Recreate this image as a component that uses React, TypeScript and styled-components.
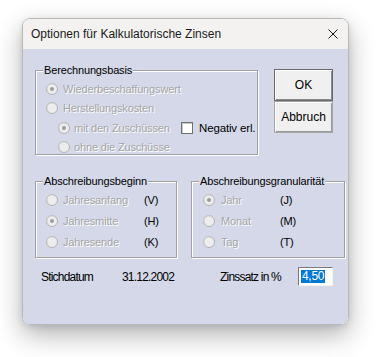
import React from "react";
import styled, { createGlobalStyle } from "styled-components";

const GlobalStyle = createGlobalStyle`
  html, body { margin: 0; padding: 0; background: #ffffff; }
  body { font-family: "Liberation Sans", Arial, sans-serif; }
  * { box-sizing: border-box; }
`;

const Stage = styled.div`
  width: 378px;
  height: 357px;
  padding: 18px 0 0 22px;
  background: #ffffff;
`;

const Window = styled.div`
  width: 327px;
  height: 307px;
  border: 1px solid #b8b8b8;
  border-radius: 8px;
  overflow: hidden;
  display: flex;
  flex-direction: column;
  box-shadow: 0 10px 26px rgba(0, 0, 0, 0.3), 0 2px 6px rgba(0, 0, 0, 0.1);
`;

const TitleBar = styled.div`
  height: 30px;
  flex: none;
  background: #f3f2f1;
  display: flex;
  align-items: center;
  justify-content: space-between;
  padding: 0 10px 0 8px;
  font-size: 12px;
  color: #1a1a1a;
`;

const Body = styled.div`
  flex: 1;
  background: #d4d8e8;
  padding: 15px 0 0 12px;
  font-size: 11px;
  letter-spacing: -0.15px;
`;

const TopRow = styled.div`
  display: flex;
  align-items: flex-start;
`;

const Group = styled.fieldset<{ $w: number; $h: number }>`
  margin: 0;
  padding: 0;
  width: ${(p) => p.$w}px;
  height: ${(p) => p.$h}px;
  border: 1px solid #a0a0a0;
  box-shadow: inset 1px 1px 0 #ffffff, 1px 1px 0 #ffffff;
  min-width: 0;
`;

const Legend = styled.legend`
  margin-left: 7px;
  padding: 0 1px;
  line-height: 13px;
  font-size: 11px;
  color: #000000;
  background: #d4d8e8;
`;

const Rows = styled.div<{ $pt: number; $pl: number }>`
  padding: ${(p) => p.$pt}px 0 0 ${(p) => p.$pl}px;
  display: flex;
  flex-direction: column;
`;

const Row = styled.div<{ $h: number; $indent?: number }>`
  height: ${(p) => p.$h}px;
  display: flex;
  align-items: center;
  padding-left: ${(p) => p.$indent || 0}px;
`;

const RadioBox = styled.span<{ $gap: number }>`
  width: 12px;
  height: 12px;
  flex: none;
  margin-right: ${(p) => p.$gap}px;
  display: inline-flex;
`;

const DisabledText = styled.span<{ $w?: number }>`
  color: #a6a6a6;
  text-shadow: 1px 1px 0 #ffffff;
  white-space: nowrap;
  ${(p) => (p.$w ? `width: ${p.$w}px; flex: none;` : "")}
`;

const Key = styled.span`
  color: #000000;
`;

const CheckBox = styled.span`
  width: 12px;
  height: 12px;
  flex: none;
  background: #ffffff;
  border: 1px solid #6f6f6f;
  box-shadow: inset 1px 1px 0 #c8c8c8;
  margin-right: 6px;
`;

const CheckLabel = styled.span`
  color: #000000;
  font-size: 11.5px;
`;

const ButtonCol = styled.div`
  margin: 5px 0 0 16px;
  display: flex;
  flex-direction: column;
`;

const Button = styled.div<{ $default?: boolean }>`
  width: 59px;
  height: 32px;
  display: flex;
  align-items: center;
  justify-content: center;
  background: #f0f0f0;
  font-size: 12px;
  letter-spacing: 0;
  color: #000000;
  border: 1px solid ${(p) => (p.$default ? "#6a6a6a" : "#a6a6a6")};
  box-shadow: ${(p) =>
    p.$default
      ? "inset 1px 1px 0 #ffffff, inset -1px -1px 0 #8a8a8a"
      : "inset 1px 1px 0 #ffffff, inset -1px -1px 0 #9a9a9a"};
`;

const MiddleRow = styled.div`
  margin-top: 20px;
  display: flex;
  gap: 14px;
`;

const BottomRow = styled.div`
  margin-top: 9px;
  padding-left: 6px;
  height: 19px;
  display: flex;
  align-items: center;
  font-size: 12px;
  letter-spacing: -0.8px;
  color: #000000;
`;

const Cell = styled.span<{ $w: number }>`
  width: ${(p) => p.$w}px;
  flex: none;
  white-space: nowrap;
`;

const Field = styled.div`
  width: 35px;
  height: 19px;
  background: #ffffff;
  border-top: 1px solid #7a7a7a;
  border-left: 1px solid #7a7a7a;
  border-right: 1px solid #f4f4f4;
  border-bottom: 1px solid #f4f4f4;
  padding: 2px 0 0 2px;
  display: flex;
  align-items: flex-start;
`;

const Selected = styled.span`
  background: #0078d7;
  color: #ffffff;
  height: 13px;
  line-height: 13px;
  padding: 0 1px;
  letter-spacing: -0.3px;
`;

const Radio = ({ checked, gap = 5 }: { checked?: boolean; gap?: number }) => (
  <RadioBox $gap={gap}>
    <svg width="12" height="12" viewBox="0 0 12 12">
      <circle cx="6" cy="6" r="5.5" fill="#ededed" stroke="#b2b2b2" />
      <path d="M2.2 8.8 A4.6 4.6 0 0 1 8.8 2.2" fill="none" stroke="#d0d0d0" />
      {checked && <circle cx="6" cy="6" r="2" fill="#9c9c9c" />}
    </svg>
  </RadioBox>
);

const CloseIcon = () => (
  <svg width="10" height="10" viewBox="0 0 10 10">
    <path d="M0.5 0.5 L9.5 9.5 M9.5 0.5 L0.5 9.5" stroke="#1a1a1a" strokeWidth="1" />
  </svg>
);

export default function App() {
  return (
    <Stage>
      <GlobalStyle />
      <Window>
        <TitleBar>
          <span>Optionen für Kalkulatorische Zinsen</span>
          <CloseIcon />
        </TitleBar>
        <Body>
          <TopRow>
            <Group $w={223} $h={91}>
              <Legend>Berechnungsbasis</Legend>
              <Rows $pt={2} $pl={10}>
                <Row $h={19.5}>
                  <Radio checked />
                  <DisabledText>Wiederbeschaffungswert</DisabledText>
                </Row>
                <Row $h={19.5}>
                  <Radio />
                  <DisabledText>Herstellungskosten</DisabledText>
                </Row>
                <Row $h={19.5} $indent={12}>
                  <Radio checked gap={4} />
                  <DisabledText $w={107}>mit den Zuschüssen</DisabledText>
                  <CheckBox />
                  <CheckLabel>Negativ erl.</CheckLabel>
                </Row>
                <Row $h={19.5} $indent={12}>
                  <Radio gap={4} />
                  <DisabledText>ohne die Zuschüsse</DisabledText>
                </Row>
              </Rows>
            </Group>
            <ButtonCol>
              <Button $default>OK</Button>
              <Button>Abbruch</Button>
            </ButtonCol>
          </TopRow>
          <MiddleRow>
            <Group $w={142} $h={83}>
              <Legend>Abschreibungsbeginn</Legend>
              <Rows $pt={1} $pl={10}>
                <Row $h={21}>
                  <Radio />
                  <DisabledText $w={81}>Jahresanfang</DisabledText>
                  <Key>(V)</Key>
                </Row>
                <Row $h={21}>
                  <Radio checked />
                  <DisabledText $w={81}>Jahresmitte</DisabledText>
                  <Key>(H)</Key>
                </Row>
                <Row $h={21}>
                  <Radio />
                  <DisabledText $w={81}>Jahresende</DisabledText>
                  <Key>(K)</Key>
                </Row>
              </Rows>
            </Group>
            <Group $w={154} $h={83}>
              <Legend>Abschreibungsgranularität</Legend>
              <Rows $pt={1} $pl={11}>
                <Row $h={21}>
                  <Radio checked gap={6} />
                  <DisabledText $w={59}>Jahr</DisabledText>
                  <Key>(J)</Key>
                </Row>
                <Row $h={21}>
                  <Radio gap={6} />
                  <DisabledText $w={59}>Monat</DisabledText>
                  <Key>(M)</Key>
                </Row>
                <Row $h={21}>
                  <Radio gap={6} />
                  <DisabledText $w={59}>Tag</DisabledText>
                  <Key>(T)</Key>
                </Row>
              </Rows>
            </Group>
          </MiddleRow>
          <BottomRow>
            <Cell $w={81}>Stichdatum</Cell>
            <Cell $w={98}>31.12.2002</Cell>
            <Cell $w={78}>Zinssatz in %</Cell>
            <Field>
              <Selected>4,50</Selected>
            </Field>
          </BottomRow>
        </Body>
      </Window>
    </Stage>
  );
}
